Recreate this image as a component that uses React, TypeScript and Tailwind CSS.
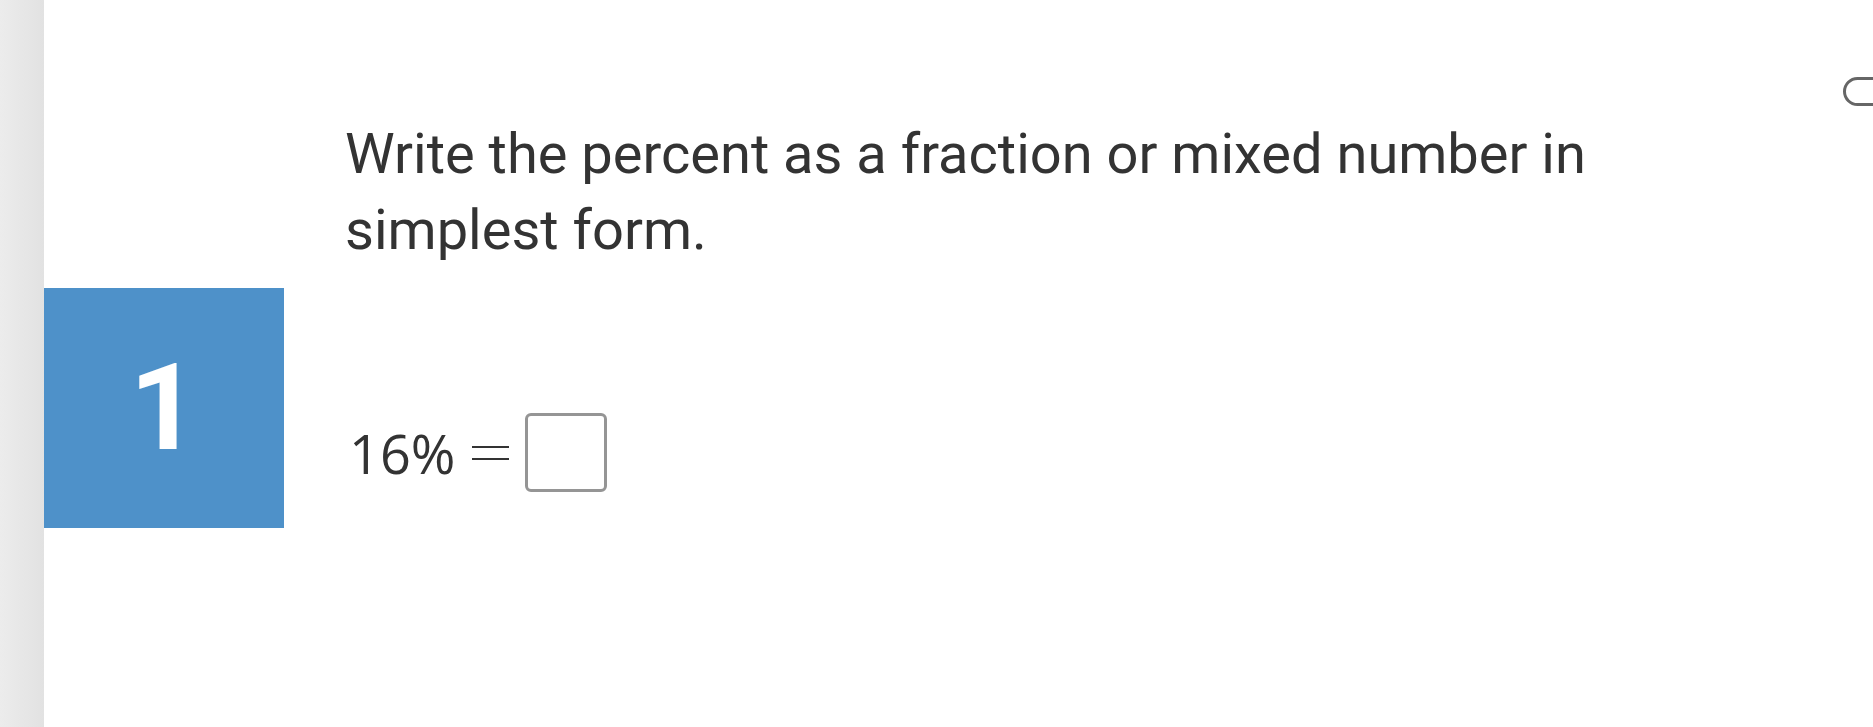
import React from 'react';

export default function App() {
  return (
    <div className="relative flex h-[727px] w-full overflow-hidden bg-white">
      <div className="w-[44px] shrink-0 bg-gradient-to-r from-[#ececec] to-[#e2e2e2]" />

      <div className="w-[240px] shrink-0 pt-[288px]">
        <div className="flex h-[240px] w-[240px] items-center justify-center bg-[#4e91c9]">
          <span className="font-['Roboto',sans-serif] text-[120px] font-bold leading-none text-white">1</span>
        </div>
      </div>

      <div className="flex flex-col pl-[61px] pt-[116px]">
        <p className="font-['Roboto',sans-serif] text-[56px] leading-[76px] text-[#333]">
          Write the percent as a fraction or mixed number in
          <br />
          simplest form.
        </p>

        <div className="mt-[145px] flex items-center pl-[4px]">
          <span className="font-['Open_Sans',sans-serif] text-[54px] leading-none text-[#333]">16%</span>
          <span className="ml-[17px] flex w-[37px] flex-col gap-[10px]" aria-label="=">
            <span className="h-[2px] bg-[#333]" />
            <span className="h-[2px] bg-[#333]" />
          </span>
          <span className="ml-[16px] h-[79px] w-[82px] rounded-[6px] border-[3px] border-[#959595]" />
        </div>
      </div>

      <div className="absolute left-[1843px] top-[77px] h-[29px] w-[70px] rounded-full border-[3px] border-[#666]" />
    </div>
  );
}
